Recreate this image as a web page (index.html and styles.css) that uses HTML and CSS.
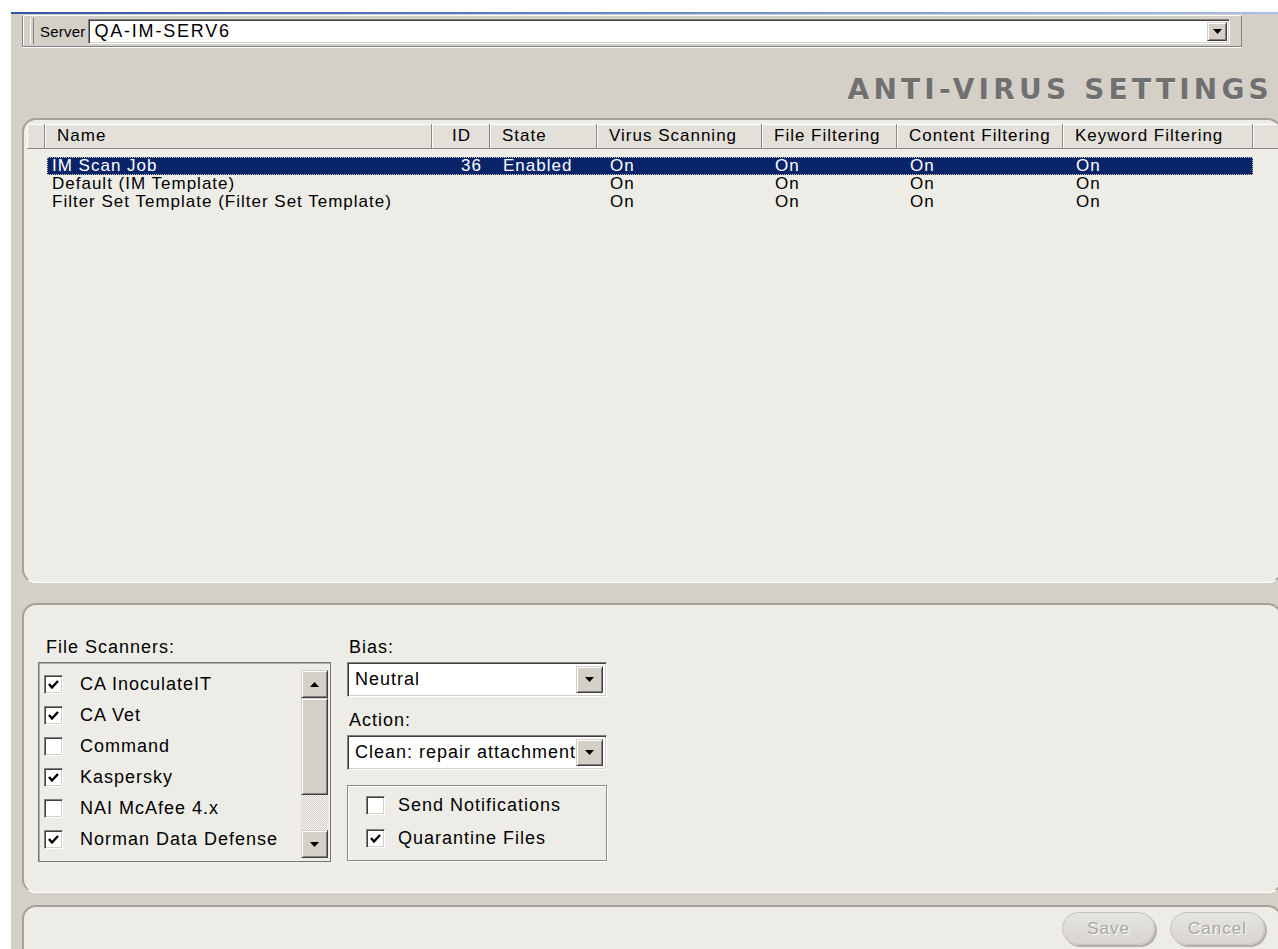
FILE: index.html
```html
<!DOCTYPE html>
<html lang="en">
<head>
<meta charset="utf-8">
<title>Anti-Virus Settings</title>
<link rel="stylesheet" href="styles.css">
</head>
<body>
<div class="screen">
  <div class="titleline"></div>

  <div class="toolbar">
    <div class="tb-band">
      <span class="tb-grip"></span>
      <span class="tb-label">Server</span>
      <div class="combo combo-server">
        <span class="combo-text">QA-IM-SERV6</span>
        <span class="combo-btn"><svg width="9" height="5" viewBox="0 0 9 5"><polygon points="0,0 9,0 4.5,5" fill="#000"/></svg></span>
      </div>
    </div>
  </div>

  <h1 class="page-title">ANTI-VIRUS SETTINGS</h1>

  <section class="panel panel-list">
    <div class="grid-head">
      <div class="hcell"></div>
      <div class="hcell">Name</div>
      <div class="hcell num">ID</div>
      <div class="hcell">State</div>
      <div class="hcell">Virus Scanning</div>
      <div class="hcell">File Filtering</div>
      <div class="hcell">Content Filtering</div>
      <div class="hcell">Keyword Filtering</div>
      <div class="hcell"></div>
    </div>
    <div class="rows">
      <div class="row sel">
        <span class="cell name">IM Scan Job</span>
        <span class="cell num">36</span>
        <span class="cell">Enabled</span>
        <span class="cell">On</span>
        <span class="cell">On</span>
        <span class="cell">On</span>
        <span class="cell">On</span>
      </div>
      <div class="row">
        <span class="cell name">Default (IM Template)</span>
        <span class="cell num"></span>
        <span class="cell"></span>
        <span class="cell">On</span>
        <span class="cell">On</span>
        <span class="cell">On</span>
        <span class="cell">On</span>
      </div>
      <div class="row">
        <span class="cell name">Filter Set Template (Filter Set Template)</span>
        <span class="cell num"></span>
        <span class="cell"></span>
        <span class="cell">On</span>
        <span class="cell">On</span>
        <span class="cell">On</span>
        <span class="cell">On</span>
      </div>
    </div>
  </section>

  <section class="panel panel-options">
    <div class="col-scanners">
      <div class="field-label lbl-scanners">File Scanners:</div>
      <div class="listbox">
        <ul class="list-items">
          <li class="item"><span class="chk on"><svg width="13" height="13" viewBox="0 0 13 13"><path d="M2 6 L5 9.5 L11 3" fill="none" stroke="#000" stroke-width="2.4"/></svg></span>CA InoculateIT</li>
          <li class="item"><span class="chk on"><svg width="13" height="13" viewBox="0 0 13 13"><path d="M2 6 L5 9.5 L11 3" fill="none" stroke="#000" stroke-width="2.4"/></svg></span>CA Vet</li>
          <li class="item"><span class="chk"></span>Command</li>
          <li class="item"><span class="chk on"><svg width="13" height="13" viewBox="0 0 13 13"><path d="M2 6 L5 9.5 L11 3" fill="none" stroke="#000" stroke-width="2.4"/></svg></span>Kaspersky</li>
          <li class="item"><span class="chk"></span>NAI McAfee 4.x</li>
          <li class="item"><span class="chk on"><svg width="13" height="13" viewBox="0 0 13 13"><path d="M2 6 L5 9.5 L11 3" fill="none" stroke="#000" stroke-width="2.4"/></svg></span>Norman Data Defense</li>
        </ul>
        <div class="scrollbar">
          <span class="sb-btn"><svg width="9" height="5" viewBox="0 0 9 5"><polygon points="0,5 9,5 4.5,0" fill="#000"/></svg></span>
          <span class="sb-thumb"></span>
          <span class="sb-track"></span>
          <span class="sb-btn"><svg width="9" height="5" viewBox="0 0 9 5"><polygon points="0,0 9,0 4.5,5" fill="#000"/></svg></span>
        </div>
      </div>
    </div>

    <div class="col-right">
      <div class="field-label">Bias:</div>
      <div class="combo combo-lg">
        <span class="combo-text">Neutral</span>
        <span class="combo-btn"><svg width="9" height="5" viewBox="0 0 9 5"><polygon points="0,0 9,0 4.5,5" fill="#000"/></svg></span>
      </div>
      <div class="field-label lbl-action">Action:</div>
      <div class="combo combo-lg">
        <span class="combo-text">Clean: repair attachment</span>
        <span class="combo-btn"><svg width="9" height="5" viewBox="0 0 9 5"><polygon points="0,0 9,0 4.5,5" fill="#000"/></svg></span>
      </div>
      <div class="groupbox">
        <div class="item"><span class="chk"></span>Send Notifications</div>
        <div class="item"><span class="chk on"><svg width="13" height="13" viewBox="0 0 13 13"><path d="M2 6 L5 9.5 L11 3" fill="none" stroke="#000" stroke-width="2.4"/></svg></span>Quarantine Files</div>
      </div>
    </div>
  </section>

  <section class="panel panel-actions">
    <button class="pill" disabled>Save</button>
    <button class="pill pill-wide" disabled>Cancel</button>
  </section>
</div>
</body>
</html>
```

FILE: styles.css
```css
* { box-sizing: border-box; }

html, body {
  margin: 0;
  height: 100%;
}

body {
  background: #fff;
  overflow: hidden;
  font-family: "Liberation Sans", Arial, sans-serif;
  color: #000;
}

.screen {
  margin: 12px 0 0 11px;
  height: 937px;
  background: #d4d0c8;
  display: flex;
  flex-direction: column;
  overflow: hidden;
}

.titleline {
  flex: none;
  height: 2px;
  background: linear-gradient(90deg, #34569e 0%, #6384c8 45%, #aabfe6 100%);
}

/* ---- toolbar ---- */
.toolbar {
  flex: none;
  height: 33px;
  padding: 1px 0 0 11px;
  display: flex;
}

.tb-band {
  width: 1220px;
  display: flex;
  align-items: center;
  border-top: 1px solid #fff;
  border-left: 1px solid #808080;
  border-right: 1px solid #808080;
  border-bottom: 1px solid #808080;
  box-shadow: inset 1px 0 0 #fff, 0 1px 0 #fff;
}

.tb-grip {
  width: 4px;
  height: 26px;
  margin-left: 7px;
  border-left: 1px solid #fff;
  border-right: 1px solid #808080;
}

.tb-label {
  font-size: 15px;
  letter-spacing: 0.2px;
  margin-left: 6px;
}

.combo {
  display: flex;
  align-items: stretch;
  background: #fff;
  border: 1px solid;
  border-color: #808080 #fff #fff #808080;
  box-shadow: inset 1px 1px 0 #404040, inset -1px -1px 0 #d4d0c8;
  padding: 2px;
}

.combo-text {
  flex: 1;
  display: flex;
  align-items: center;
  padding-left: 3px;
  white-space: nowrap;
  overflow: hidden;
}

.combo-btn {
  flex: none;
  width: 20px;
  background: #d4d0c8;
  border: 1px solid;
  border-color: #d4d0c8 #404040 #404040 #d4d0c8;
  box-shadow: inset 1px 1px 0 #fff, inset -1px -1px 0 #808080;
  display: flex;
  align-items: center;
  justify-content: center;
}

.combo-server {
  flex: 1;
  height: 25px;
  margin: 0 11px 0 3px;
  font-size: 18px;
  line-height: 19px;
  letter-spacing: 1.8px;
}

/* ---- page title ---- */
.page-title {
  flex: none;
  margin: 0;
  height: 71px;
  padding: 27px 5px 0 0;
  text-align: right;
  font: bold 28px/32px "DejaVu Sans", Verdana, sans-serif;
  letter-spacing: 4.2px;
  color: #707070;
  text-shadow: 0 1px 0 #e4e1db;
}

/* ---- rounded panels ---- */
.panel {
  flex: none;
  background: #eeece7;
  border-top: 2px solid #a5a199;
  border-left: 2px solid #a5a199;
  border-right: 2px solid #a5a199;
  border-bottom: 1px solid #fff;
  border-radius: 14px;
  margin: 0 -4px 0 11px;
  overflow: hidden;
}

.panel-list {
  height: 465px;
  padding: 4px 0 0 3px;
}

.grid-head {
  display: grid;
  grid-template-columns: 18px 387px 58px 107px 165px 135px 166px 190px 1fr;
  height: 25px;
}

.hcell {
  background: #e3e0da;
  border-right: 1px solid #8c8982;
  border-bottom: 1px solid #8c8982;
  box-shadow: inset 1px 1px 0 #fff;
  font-size: 17px;
  letter-spacing: 1px;
  line-height: 24px;
  padding-left: 12px;
  white-space: nowrap;
  overflow: hidden;
}

.hcell.num {
  text-align: right;
  padding: 0 18px 0 0;
}

.rows {
  margin: 8px 0 0 20px;
}

.row {
  display: grid;
  grid-template-columns: 385px 58px 107px 165px 135px 166px 190px;
  width: 1206px;
  height: 18px;
  font-size: 17px;
  letter-spacing: 1px;
  line-height: 18px;
}

.row.sel {
  background: #0a246a;
  color: #fff;
  outline: 1px dotted #c9c3a4;
  outline-offset: -1px;
}

.cell {
  padding-left: 13px;
  white-space: nowrap;
}

.cell.name { padding-left: 5px; }

.cell.num {
  text-align: right;
  padding: 0 8px 0 0;
}

/* ---- options panel ---- */
.panel-options {
  height: 290px;
  margin-top: 20px;
  padding: 31px 0 0 14px;
  display: flex;
  gap: 16px;
  font-size: 18px;
  letter-spacing: 1px;
}

.field-label {
  height: 22px;
  line-height: 22px;
  margin-bottom: 4px;
  padding-left: 2px;
}

.lbl-scanners { padding-left: 8px; }

.lbl-action { margin-top: 12px; }

.col-scanners { width: 293px; }

.listbox {
  height: 200px;
  display: flex;
  border: 1px solid #7a776f;
  box-shadow: inset 1px 1px 0 #b0ada6;
}

.list-items {
  flex: 1;
  list-style: none;
  margin: 0;
  padding: 6px 0 0 5px;
}

.item {
  height: 31px;
  display: flex;
  align-items: center;
  white-space: nowrap;
}

.chk {
  flex: none;
  width: 19px;
  height: 19px;
  margin-right: 17px;
  background: #fff;
  border: 1px solid;
  border-color: #808080 #fff #fff #808080;
  box-shadow: inset 1px 1px 0 #404040, inset -1px -1px 0 #d4d0c8;
  display: flex;
  align-items: center;
  justify-content: center;
}

.scrollbar {
  flex: none;
  width: 27px;
  margin: 7px 2px 3px 0;
  display: flex;
  flex-direction: column;
}

.sb-btn,
.sb-thumb {
  background: #d4d0c8;
  border: 1px solid;
  border-color: #d4d0c8 #404040 #404040 #d4d0c8;
  box-shadow: inset 1px 1px 0 #fff, inset -1px -1px 0 #808080;
}

.sb-btn {
  height: 28px;
  display: flex;
  align-items: center;
  justify-content: center;
}

.sb-thumb { height: 97px; }

.sb-track {
  flex: 1;
  background: repeating-conic-gradient(#f4f3f0 0 25%, #d4d0c8 0 50%) 0 0 / 2px 2px;
}

.col-right { width: 260px; }

.combo-lg {
  height: 35px;
  padding: 3px;
}

.combo-lg .combo-text { padding-left: 4px; }

.combo-lg .combo-btn { width: 27px; }

.groupbox {
  margin-top: 15px;
  height: 76px;
  border: 1px solid #8c8982;
  box-shadow: inset 1px 1px 0 #fff, 1px 1px 0 #fff;
  padding: 5px 0 0 18px;
  display: flex;
  flex-direction: column;
  gap: 4px;
}

.groupbox .item { height: 29px; }

.groupbox .chk { margin-right: 13px; }

/* ---- button bar ---- */
.panel-actions {
  height: 60px;
  margin-top: 12px;
  padding: 5px 15px 0 0;
  display: flex;
  justify-content: flex-end;
  align-items: flex-start;
  gap: 15px;
}

.pill {
  width: 93px;
  height: 33px;
  border-radius: 17px;
  border: 1px solid #c4c1bb;
  background: linear-gradient(#e6e4e0, #d8d5cf);
  box-shadow: 2px 2px 0 #b3b0a9;
  font-family: "Liberation Sans", Arial, sans-serif;
  font-size: 17px;
  letter-spacing: 1px;
  color: #a5a5a5;
  text-shadow: 1px 1px 0 #fff;
  padding: 0;
}

.pill-wide { width: 95px; }
```
